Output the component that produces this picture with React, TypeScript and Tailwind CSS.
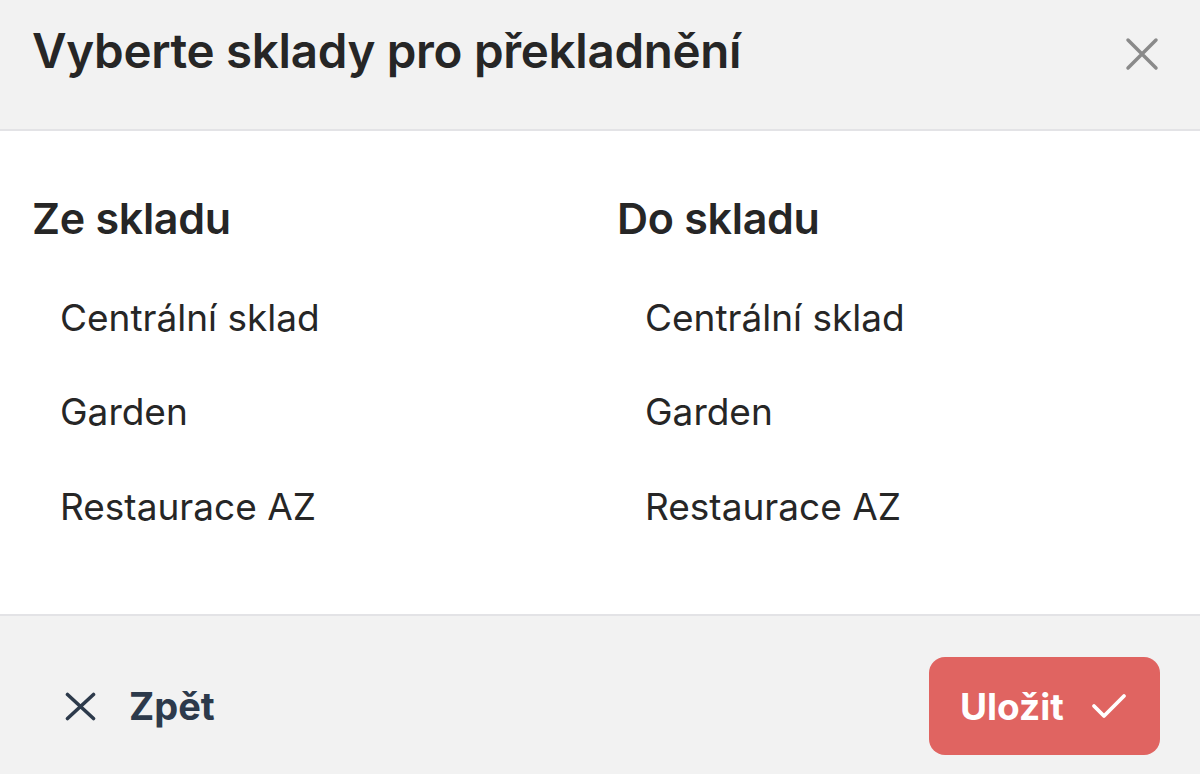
import React from "react";

const items = ["Centrální sklad", "Garden", "Restaurace AZ"];

function Column({ title }: { title: string }) {
  return (
    <div className="flex flex-col">
      <h2 className="text-[43px] font-semibold leading-none text-[#262626] tracking-[-0.3px] pt-[66px]">{title}</h2>
      <ul className="flex flex-col mt-[30px] pl-[28px]">
        {items.map((it) => (
          <li key={it} className="h-[94.5px] flex items-center text-[37px] text-[#262626] leading-none">
            {it}
          </li>
        ))}
      </ul>
    </div>
  );
}

export default function App() {
  return (
    <div className="w-[1200px] h-[774px] flex flex-col bg-white overflow-hidden" style={{ fontFamily: "Inter, 'Noto Sans', sans-serif" }}>
      <header className="h-[131px] shrink-0 bg-[#f2f2f2] border-b-2 border-[#e3e3e6] flex items-start justify-between pl-[32px] pr-[41px] pt-[27px]">
        <h1 className="text-[47.5px] font-semibold text-[#262626] leading-none tracking-[-0.3px]">Vyberte sklady pro překladnění</h1>
        <svg width="34" height="34" viewBox="0 0 34 34" className="text-[#8a8a8a] mt-[10px]">
          <path d="M3 3 L31 31 M31 3 L3 31" stroke="currentColor" strokeWidth="3.5" strokeLinecap="round" />
        </svg>
      </header>
      <main className="h-[485px] shrink-0 grid grid-cols-[585px_1fr] px-[32px] border-b-2 border-[#e3e3e6]">
        <Column title="Ze skladu" />
        <Column title="Do skladu" />
      </main>
      <footer className="flex-1 bg-[#f2f2f2] flex items-start justify-between pl-[65px] pr-[40px] pt-[41px]">
        <button className="h-[98px] flex items-center gap-[33px] text-[#2d3a4b]">
          <svg width="31" height="29" viewBox="0 0 31 29">
            <path d="M2.5 2.5 L28.5 26.5 M28.5 2.5 L2.5 26.5" stroke="currentColor" strokeWidth="3.6" strokeLinecap="round" />
          </svg>
          <span className="text-[38px] font-bold leading-none">Zpět</span>
        </button>
        <button className="w-[231px] h-[98px] rounded-[16px] bg-[#e06461] flex items-center pl-[31px] gap-[27px] text-white">
          <span className="text-[37px] font-bold leading-none">Uložit</span>
          <svg width="36" height="28" viewBox="0 0 36 28">
            <path d="M3 14 L13 24 L33 4" stroke="currentColor" strokeWidth="3.8" strokeLinecap="round" strokeLinejoin="round" fill="none" />
          </svg>
        </button>
      </footer>
    </div>
  );
}
